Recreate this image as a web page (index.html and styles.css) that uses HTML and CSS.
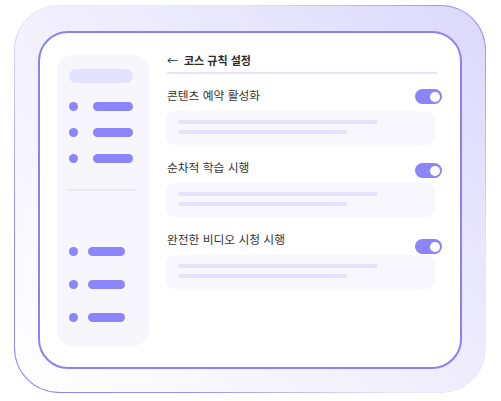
FILE: index.html
```html
<!DOCTYPE html>
<html lang="ko">
<head>
  <meta charset="UTF-8">
  <meta name="viewport" content="width=device-width, initial-scale=1.0">
  <link rel="stylesheet" href="styles.css">
</head>
<body>

<div class="frame">
  <div class="screen">

    <div class="sidebar">
      <div class="side-pill"></div>

      <div class="side-group">
        <div class="side-item"><span class="dot"></span><span class="bar"></span></div>
        <div class="side-item"><span class="dot"></span><span class="bar"></span></div>
        <div class="side-item"><span class="dot"></span><span class="bar"></span></div>
      </div>

      <div class="side-divider"></div>

      <div class="side-group lower">
        <div class="side-item"><span class="dot"></span><span class="bar"></span></div>
        <div class="side-item"><span class="dot"></span><span class="bar"></span></div>
        <div class="side-item"><span class="dot"></span><span class="bar"></span></div>
      </div>
    </div>

    <div class="main">
      <div class="page-title"><span class="arrow">←</span>코스 규칙 설정</div>

      <div class="rule">
        <div class="rule-head">
          <span class="rule-name">콘텐츠 예약 활성화</span>
          <span class="toggle first"></span>
        </div>
        <div class="rule-card">
          <span class="line"></span>
          <span class="line short"></span>
        </div>
      </div>

      <div class="rule">
        <div class="rule-head">
          <span class="rule-name">순차적 학습 시행</span>
          <span class="toggle second"></span>
        </div>
        <div class="rule-card">
          <span class="line"></span>
          <span class="line short"></span>
        </div>
      </div>

      <div class="rule">
        <div class="rule-head">
          <span class="rule-name">완전한 비디오 시청 시행</span>
          <span class="toggle third"></span>
        </div>
        <div class="rule-card">
          <span class="line"></span>
          <span class="line short"></span>
        </div>
      </div>
    </div>

  </div>
</div>

</body>
</html>
```

FILE: styles.css
```css
body {
  margin: 0;
  padding: 5px 0 0 14px;
  background: #fff;
  font-family: "Noto Sans CJK KR", "Noto Sans", sans-serif;
}

.frame {
  box-sizing: border-box;
  width: 472px;
  height: 388px;
  padding: 25px 23px 23px 23px;
  border: 1px solid transparent;
  border-radius: 45px;
  background:
    linear-gradient(225deg, #dcd8fd 0%, #efedfd 45%, #ffffff 100%) padding-box,
    linear-gradient(225deg, #8c84f8 0%, #e9e7fb 30%, #e9e7fb 55%, #958ef8 80%, #8c84f8 100%) border-box;
}

.screen {
  box-sizing: border-box;
  height: 338px;
  display: flex;
  padding: 19px 18px 21px 17px;
  background-color: #fff;
  border: 2px solid #8a83f8;
  border-radius: 30px;
}

/* sidebar */
.sidebar {
  box-sizing: border-box;
  width: 92px;
  margin-top: 3px;
  padding: 14px 12px 0 12px;
  background-color: #f7f6fc;
  border-radius: 16px;
  flex-shrink: 0;
}

.side-pill {
  width: 64px;
  height: 14px;
  border-radius: 7px;
  background-color: #e5e2fd;
}

.side-group {
  display: flex;
  flex-direction: column;
  gap: 17px;
  margin-top: 19px;
}

.side-group.lower {
  gap: 24px;
  margin-top: 56px;
}

.side-item {
  display: flex;
  align-items: center;
  gap: 15px;
  height: 9px;
}

.side-group.lower .side-item {
  gap: 10px;
}

.dot {
  width: 9px;
  height: 9px;
  border-radius: 50%;
  background-color: #8b85f9;
}

.bar {
  width: 40px;
  height: 9px;
  border-radius: 5px;
  background-color: #8b85f9;
}

.side-group.lower .bar {
  width: 37px;
}

.side-divider {
  height: 2px;
  margin: 26px 0 0 -2px;
  background-color: #ebeaf1;
}

/* main */
.main {
  width: 276px;
  margin-left: 17px;
}

.page-title {
  margin: 0 5px 0 1px;
  padding-bottom: 4px;
  border-bottom: 2px solid #e7e5f8;
  font-size: 11px;
  line-height: 16px;
  font-weight: 700;
  color: #2a2a2a;
}

.arrow {
  font-weight: 400;
  margin-right: 6px;
}

.rule {
  margin-top: 13px;
}

.rule + .rule {
  margin-top: 14px;
}

.rule-head {
  display: flex;
  justify-content: space-between;
  align-items: flex-start;
  height: 16px;
  padding-left: 1px;
}

.rule-name {
  font-size: 11.75px;
  line-height: 16px;
  color: #333;
}

.toggle {
  position: relative;
  width: 27px;
  height: 15px;
  border-radius: 8px;
  background-color: #8b85f9;
}

.toggle::after {
  content: "";
  position: absolute;
  top: 2.5px;
  right: 2px;
  width: 10px;
  height: 10px;
  border-radius: 50%;
  background-color: #fff;
}

.toggle.first { margin-top: 2px; }
.toggle.second { margin-top: 4px; }
.toggle.third { margin-top: 8px; }

.rule-card {
  box-sizing: border-box;
  width: 269px;
  height: 34px;
  margin-top: 8px;
  padding: 9px 0 0 12px;
  background-color: #f8f7fd;
  border-radius: 8px;
}

.line {
  display: block;
  width: 200px;
  height: 4px;
  border-radius: 2px;
  background-color: #e5e2fd;
}

.line.short {
  width: 169px;
  margin-top: 6px;
}
```
